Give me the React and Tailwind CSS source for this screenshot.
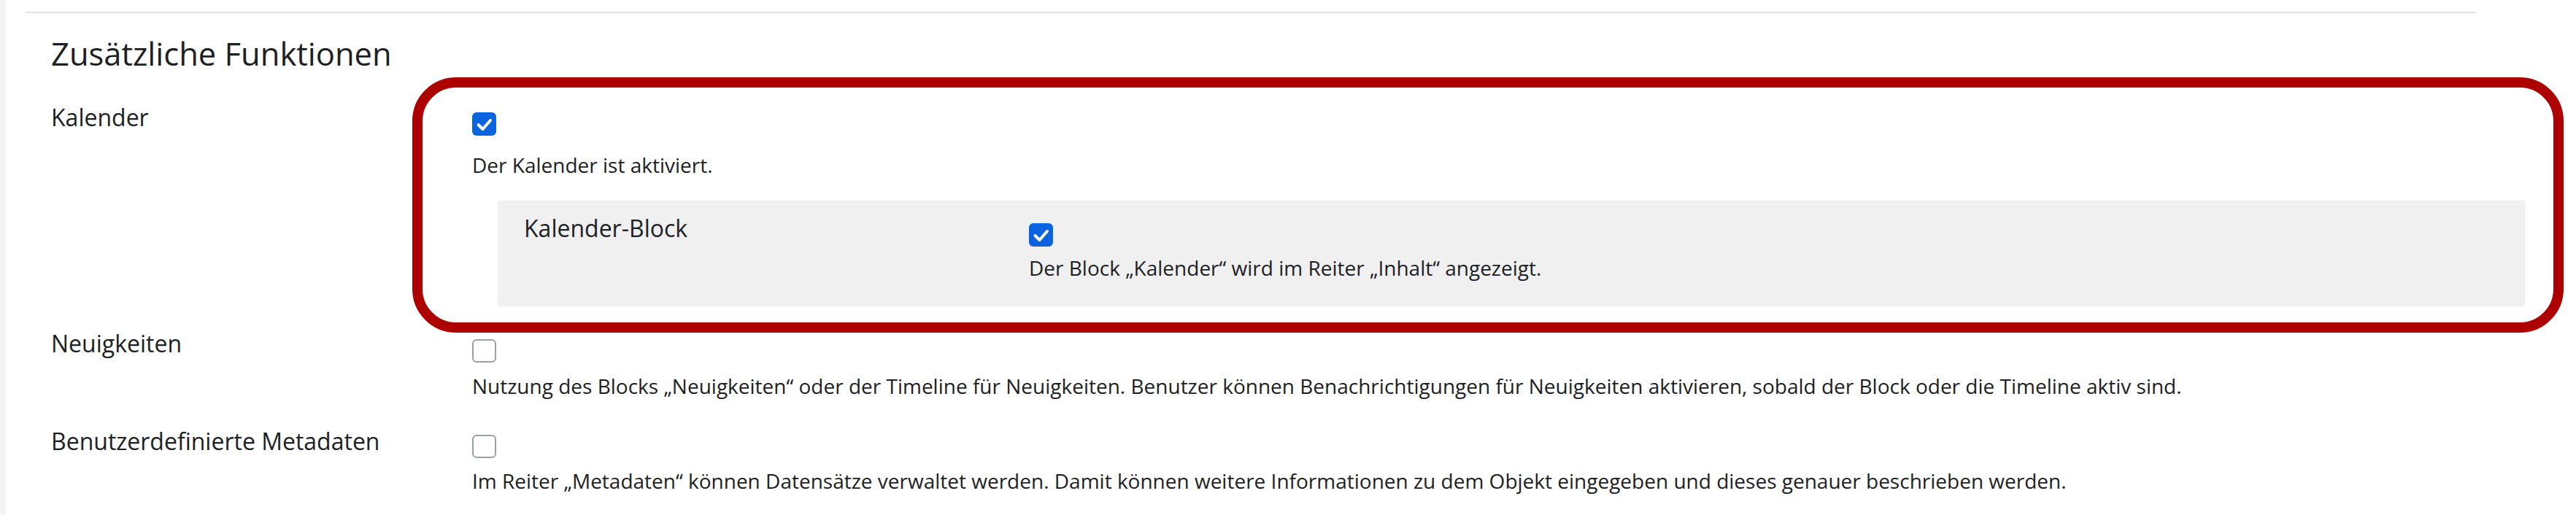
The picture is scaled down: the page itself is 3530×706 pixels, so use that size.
import React from "react";

function Checkbox({ checked }) {
  if (checked) {
    return (
      <div className="w-[33px] h-[32px] rounded-[6px] bg-[#0b63dd] flex items-center justify-center">
        <svg width="33" height="32" viewBox="0 0 33 32" fill="none">
          <polyline points="8.5,17 14.5,23 25,11" stroke="#ffffff" strokeWidth="4" strokeLinecap="round" strokeLinejoin="round" />
        </svg>
      </div>
    );
  }
  return <div className="w-[33px] h-[32px] rounded-[6px] bg-white border-2 border-[#9aa0a6]" />;
}

export default function App() {
  return (
    <div className="relative w-[3530px] h-[706px] bg-white flex overflow-hidden font-['Open_Sans',sans-serif] text-[#1d2125]">
      <div className="w-[8px] shrink-0 bg-[#f4f4f4]" />
      <div className="pl-[27px] pt-[16px]">
        <div className="w-[3358px] border-t-2 border-[#e2e2e2]">
          <div className="pl-[35px]">
            <h3 className="mt-[30px] text-[43.5px] leading-[52px] font-medium">Zusätzliche Funktionen</h3>

            {/* Kalender */}
            <div className="mt-[37px] flex">
              <div className="w-[577px] shrink-0 text-[32px] leading-[48px]">Kalender</div>
              <div className="flex flex-col">
                <div className="mt-[17px]">
                  <Checkbox checked />
                </div>
                <div className="mt-[19px] text-[28px] leading-[42px]">Der Kalender ist aktiviert.</div>
                <div className="mt-[28px] ml-[35px] w-[2778px] bg-[#f0f0f0] pt-[14px] pb-[32px] pl-[36px] flex">
                  <div className="w-[692px] shrink-0 text-[32px] leading-[48px]">Kalender-Block</div>
                  <div className="flex flex-col">
                    <div className="mt-[17px]">
                      <Checkbox checked />
                    </div>
                    <div className="mt-[8px] text-[28px] leading-[42px]">
                      Der Block „Kalender“ wird im Reiter „Inhalt“ angezeigt.
                    </div>
                  </div>
                </div>
              </div>
            </div>

            {/* Neuigkeiten */}
            <div className="mt-[27px] flex">
              <div className="w-[577px] shrink-0 text-[32px] leading-[48px]">Neuigkeiten</div>
              <div className="flex flex-col">
                <div className="mt-[18px]">
                  <Checkbox />
                </div>
                <div className="mt-[11px] text-[28px] leading-[42px] whitespace-nowrap">
                  Nutzung des Blocks „Neuigkeiten“ oder der Timeline für Neuigkeiten. Benutzer können Benachrichtigungen für Neuigkeiten aktivieren, sobald der Block oder die Timeline aktiv sind.
                </div>
              </div>
            </div>

            {/* Metadaten */}
            <div className="mt-[31px] flex">
              <div className="w-[577px] shrink-0 text-[32px] leading-[48px]">Benutzerdefinierte Metadaten</div>
              <div className="flex flex-col">
                <div className="mt-[15px]">
                  <Checkbox />
                </div>
                <div className="mt-[10px] text-[28px] leading-[42px] whitespace-nowrap">
                  Im Reiter „Metadaten“ können Datensätze verwaltet werden. Damit können weitere Informationen zu dem Objekt eingegeben und dieses genauer beschrieben werden.
                </div>
              </div>
            </div>
          </div>
        </div>
      </div>

      {/* annotation highlight */}
      <div className="absolute left-[565px] top-[106px] w-[2948px] h-[350px] border-[14px] border-[#ad0000] rounded-[60px] pointer-events-none" />
    </div>
  );
}
